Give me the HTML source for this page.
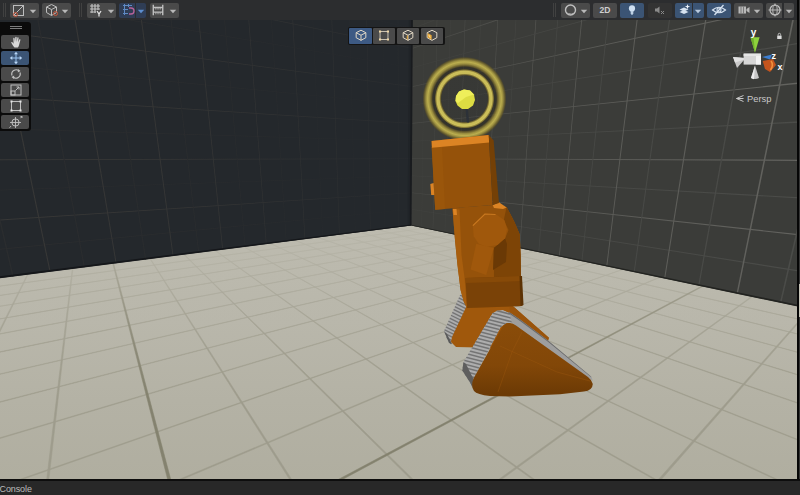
<!DOCTYPE html><html><head><meta charset="utf-8"><style>
html,body{margin:0;padding:0;background:#282828;}
body{width:800px;height:495px;overflow:hidden;position:relative;font-family:"Liberation Sans",sans-serif;}
</style></head><body><svg width="800" height="495" viewBox="0 0 800 495" style="position:absolute;left:0;top:0"><defs><linearGradient id="flg" gradientUnits="userSpaceOnUse" x1="0" y1="220" x2="0" y2="480"><stop offset="0.0000" stop-color="#bdbbaf"/><stop offset="0.0231" stop-color="#bdbbaf"/><stop offset="0.3846" stop-color="#b9b7ab"/><stop offset="0.6923" stop-color="#b4b2a5"/><stop offset="0.9923" stop-color="#b0aea0"/><stop offset="1.0000" stop-color="#b0aea0"/></linearGradient></defs><rect x="0" y="0" width="800" height="495" fill="url(#flg)"/>
<g><polygon points="395.0,227.5 394.7,227.5 20107.2,4705.5 19441.8,4547.6" fill="#9e9c8d" stroke="#9e9c8d" stroke-width="0.50"/><polygon points="424.4,228.2 424.7,228.2 -32538.9,4726.9 -31057.3,4519.4" fill="#9e9c8d" stroke="#9e9c8d" stroke-width="0.50"/><polygon points="377.5,229.7 377.2,229.7 18392.8,4705.3 17786.9,4547.4" fill="#9e9c8d" stroke="#9e9c8d" stroke-width="0.50"/><polygon points="438.9,231.2 439.2,231.2 -30271.5,4727.1 -28892.9,4519.6" fill="#9e9c8d" stroke="#9e9c8d" stroke-width="0.50"/><polygon points="358.9,232.1 358.6,232.1 16678.4,4705.2 16132.1,4547.3" fill="#9e9c8d" stroke="#9e9c8d" stroke-width="0.50"/><polygon points="454.6,234.5 454.9,234.5 -28004.2,4727.3 -26728.5,4519.7" fill="#9e9c8d" stroke="#9e9c8d" stroke-width="0.50"/><polygon points="339.1,234.6 338.7,234.7 14964.1,4705.0 14477.2,4547.1" fill="#9e9c8d" stroke="#9e9c8d" stroke-width="0.50"/><polygon points="471.9,238.1 472.2,238.1 -25736.8,4727.5 -24564.1,4519.9" fill="#9e9c8d" stroke="#9e9c8d" stroke-width="0.50"/><polygon points="317.8,237.3 317.4,237.4 13249.7,4704.9 12822.4,4547.0" fill="#9e9c8d" stroke="#9e9c8d" stroke-width="0.50"/><polygon points="490.8,242.0 491.1,242.1 -23469.5,4727.7 -22399.7,4520.1" fill="#9e9c8d" stroke="#9e9c8d" stroke-width="0.50"/><polygon points="295.0,240.2 294.6,240.3 11535.3,4704.7 11167.5,4546.9" fill="#9e9c8d" stroke="#9e9c8d" stroke-width="0.50"/><polygon points="511.6,246.4 512.0,246.5 -21202.1,4727.9 -20235.3,4520.3" fill="#9e9c8d" stroke="#9e9c8d" stroke-width="0.50"/><polygon points="270.5,243.4 270.0,243.4 9820.9,4704.6 9512.7,4546.7" fill="#9e9c8d" stroke="#9e9c8d" stroke-width="0.50"/><polygon points="534.7,251.2 535.1,251.3 -18934.7,4728.1 -18071.0,4520.5" fill="#9e9c8d" stroke="#9e9c8d" stroke-width="0.50"/><polygon points="244.1,246.8 243.6,246.8 8106.5,4704.5 7857.8,4546.6" fill="#9e9c8d" stroke="#9e9c8d" stroke-width="0.50"/><polygon points="560.5,256.6 561.0,256.7 -16667.4,4728.3 -15906.6,4520.7" fill="#9e9c8d" stroke="#9e9c8d" stroke-width="0.50"/><polygon points="215.4,250.4 214.9,250.5 6392.1,4704.3 6202.9,4546.4" fill="#9e9c8d" stroke="#9e9c8d" stroke-width="0.50"/><polygon points="589.4,262.6 589.9,262.8 -14400.0,4728.4 -13742.2,4520.9" fill="#9e9c8d" stroke="#9e9c8d" stroke-width="0.50"/><polygon points="184.4,254.4 183.8,254.5 4677.7,4704.2 4548.1,4546.3" fill="#9e9c8d" stroke="#9e9c8d" stroke-width="0.50"/><polygon points="622.0,269.5 622.6,269.6 -12132.7,4728.6 -11577.8,4521.0" fill="#9e9c8d" stroke="#9e9c8d" stroke-width="0.50"/><polygon points="150.5,258.7 149.9,258.8 2963.4,4704.0 2893.2,4546.1" fill="#9e9c8d" stroke="#9e9c8d" stroke-width="0.50"/><polygon points="659.1,277.2 659.9,277.4 -9865.3,4728.8 -9413.4,4521.2" fill="#9e9c8d" stroke="#9e9c8d" stroke-width="0.50"/><polygon points="113.7,263.4 112.7,263.5 1251.4,4740.5 1236.1,4512.4" fill="#84826f" stroke="#84826f" stroke-width="0.50"/><polygon points="701.7,286.1 702.8,286.4 -7680.1,4777.9 -7175.7,4477.8" fill="#84826f" stroke="#84826f" stroke-width="0.50"/><polygon points="73.0,268.6 72.2,268.7 -465.4,4703.7 -416.5,4545.9" fill="#9e9c8d" stroke="#9e9c8d" stroke-width="0.50"/><polygon points="751.4,296.5 752.4,296.7 -5330.6,4729.2 -5084.6,4521.6" fill="#9e9c8d" stroke="#9e9c8d" stroke-width="0.50"/><polygon points="28.2,274.3 27.3,274.4 -2179.8,4703.6 -2071.4,4545.7" fill="#9e9c8d" stroke="#9e9c8d" stroke-width="0.50"/><polygon points="809.6,308.7 810.8,308.9 -3063.2,4729.4 -2920.2,4521.8" fill="#9e9c8d" stroke="#9e9c8d" stroke-width="0.50"/><polygon points="-21.4,280.7 -22.4,280.8 -3894.2,4703.4 -3726.2,4545.6" fill="#9e9c8d" stroke="#9e9c8d" stroke-width="0.50"/><polygon points="879.0,323.2 880.4,323.5 -795.9,4729.6 -755.9,4522.0" fill="#9e9c8d" stroke="#9e9c8d" stroke-width="0.50"/><polygon points="-76.8,287.7 -77.8,287.9 -5608.6,4703.3 -5381.1,4545.4" fill="#9e9c8d" stroke="#9e9c8d" stroke-width="0.50"/><polygon points="963.1,340.8 964.8,341.1 1471.5,4729.8 1408.5,4522.1" fill="#9e9c8d" stroke="#9e9c8d" stroke-width="0.50"/><polygon points="-138.8,295.7 -140.0,295.8 -7323.0,4703.1 -7035.9,4545.3" fill="#9e9c8d" stroke="#9e9c8d" stroke-width="0.50"/><polygon points="1067.1,362.6 1069.2,363.0 3738.8,4730.0 3572.9,4522.3" fill="#9e9c8d" stroke="#9e9c8d" stroke-width="0.50"/><polygon points="-208.9,304.6 -210.3,304.8 -9037.4,4703.0 -8690.8,4545.2" fill="#9e9c8d" stroke="#9e9c8d" stroke-width="0.50"/><polygon points="1199.2,390.2 1201.9,390.7 6006.2,4730.2 5737.3,4522.5" fill="#9e9c8d" stroke="#9e9c8d" stroke-width="0.50"/><polygon points="-288.7,314.8 -290.2,315.0 -10751.7,4702.8 -10345.6,4545.0" fill="#9e9c8d" stroke="#9e9c8d" stroke-width="0.50"/><polygon points="1372.3,426.4 1375.9,427.1 8273.5,4730.4 7901.7,4522.7" fill="#9e9c8d" stroke="#9e9c8d" stroke-width="0.50"/><polygon points="-380.4,326.5 -382.1,326.7 -12466.1,4702.7 -12000.5,4544.9" fill="#9e9c8d" stroke="#9e9c8d" stroke-width="0.50"/><polygon points="1609.1,475.9 1614.1,476.9 10540.9,4730.6 10066.1,4522.9" fill="#9e9c8d" stroke="#9e9c8d" stroke-width="0.50"/><polygon points="-486.8,340.1 -488.8,340.4 -14180.5,4702.6 -13655.4,4544.7" fill="#9e9c8d" stroke="#9e9c8d" stroke-width="0.50"/><polygon points="1952.7,547.7 1960.3,549.3 12808.3,4730.8 12230.5,4523.1" fill="#9e9c8d" stroke="#9e9c8d" stroke-width="0.50"/><polygon points="-611.8,356.1 -614.2,356.4 -15894.9,4702.4 -15310.2,4544.6" fill="#9e9c8d" stroke="#9e9c8d" stroke-width="0.50"/><polygon points="2496.5,661.4 2509.2,664.1 15075.6,4731.0 14394.9,4523.3" fill="#9e9c8d" stroke="#9e9c8d" stroke-width="0.50"/><polygon points="-760.7,375.1 -763.6,375.5 -17609.3,4702.3 -16965.1,4544.5" fill="#9e9c8d" stroke="#9e9c8d" stroke-width="0.50"/><polygon points="3487.4,868.6 3512.7,873.9 17343.0,4731.2 16559.2,4523.4" fill="#9e9c8d" stroke="#9e9c8d" stroke-width="0.50"/><polygon points="-940.4,398.1 -945.6,398.7 -19487.0,4738.7 -18470.1,4510.7" fill="#84826f" stroke="#84826f" stroke-width="0.50"/><polygon points="5844.9,1361.6 5951.1,1383.8 19818.9,4780.2 18537.4,4480.0" fill="#84826f" stroke="#84826f" stroke-width="0.50"/><polygon points="-1164.4,426.7 -1168.9,427.2 -21038.1,4702.0 -20274.8,4544.2" fill="#9e9c8d" stroke="#9e9c8d" stroke-width="0.50"/><polygon points="19195.9,4153.3 20024.6,4326.6 21877.7,4731.5 20888.0,4523.8" fill="#9e9c8d" stroke="#9e9c8d" stroke-width="0.50"/><polygon points="-1447.6,462.9 -1453.4,463.6 -22752.5,4701.8 -21929.7,4544.0" fill="#9e9c8d" stroke="#9e9c8d" stroke-width="0.50"/><polygon points="-1818.8,510.3 -1826.5,511.2 -24466.8,4701.7 -23584.5,4543.9" fill="#9e9c8d" stroke="#9e9c8d" stroke-width="0.50"/><polygon points="-2326.3,575.1 -2337.1,576.5 -26181.2,4701.5 -25239.4,4543.7" fill="#9e9c8d" stroke="#9e9c8d" stroke-width="0.50"/><polygon points="-3062.2,669.1 -3078.5,671.2 -27895.6,4701.4 -26894.2,4543.6" fill="#9e9c8d" stroke="#9e9c8d" stroke-width="0.50"/></g>
<defs><linearGradient id="fog" x1="0" y1="0" x2="0" y2="1"><stop offset="0.0000" stop-color="#bdbbaf" stop-opacity="0.82"/><stop offset="0.1573" stop-color="#bcbaae" stop-opacity="0.72"/><stop offset="0.3258" stop-color="#bbb9ad" stop-opacity="0.55"/><stop offset="0.4944" stop-color="#b9b7ab" stop-opacity="0.36"/><stop offset="0.7191" stop-color="#b7b5a9" stop-opacity="0.15"/><stop offset="1.0000" stop-color="#b4b2a5" stop-opacity="0.00"/></linearGradient></defs><rect x="0" y="222" width="800" height="178" fill="url(#fog)"/>
<polygon points="411.2,225.4 -33995.5,4620.5 -21440.0,-36711.7 417.4,-709.2" fill="#24282c" />
<polygon points="411.2,225.4 21452.7,4625.3 14198.1,-36708.7 417.4,-709.2" fill="#3b3c39" />
<g><polygon points="411.3,209.5 411.3,208.9 -34007.1,3541.2 -33325.3,3509.6" fill="#2b2d2f" /><polygon points="411.3,209.5 411.3,208.9 21471.3,3545.9 21053.8,3514.2" fill="#4b4c49" /><polygon points="398.5,227.0 398.1,227.1 397.0,-742.8 397.7,-741.7" fill="#383837" /><polygon points="421.6,227.6 421.9,227.6 434.5,-753.9 433.9,-752.4" fill="#4b4c49" /><polygon points="411.5,193.0 411.5,192.4 -33671.0,2434.8 -32995.9,2425.1" fill="#383837" /><polygon points="411.5,193.0 411.5,192.4 21277.2,2439.5 20863.5,2429.7" fill="#63635f" /><polygon points="384.9,228.8 384.4,228.8 375.4,-778.5 376.1,-777.3" fill="#2b2d2f" /><polygon points="432.8,229.9 433.1,230.0 453.2,-802.6 452.5,-800.9" fill="#63635f" /><polygon points="411.6,176.1 411.6,175.6 -33335.0,1328.4 -32666.5,1340.7" fill="#2b2d2f" /><polygon points="411.6,176.1 411.6,175.6 21083.0,1333.1 20673.1,1345.2" fill="#4b4c49" /><polygon points="370.6,230.6 370.1,230.7 352.0,-817.1 352.8,-815.8" fill="#383837" /><polygon points="444.7,232.4 445.1,232.5 473.9,-856.8 473.2,-854.9" fill="#4b4c49" /><polygon points="411.7,159.0 411.7,158.4 -32998.9,222.0 -32337.1,256.2" fill="#383837" /><polygon points="411.7,159.0 411.7,158.4 20888.8,226.6 20482.8,260.7" fill="#63635f" /><polygon points="355.5,232.5 355.0,232.6 326.5,-859.0 327.4,-857.6" fill="#2b2d2f" /><polygon points="457.6,235.1 458.0,235.2 497.1,-917.5 496.3,-915.4" fill="#63635f" /><polygon points="411.8,141.5 411.8,140.9 -32662.8,-884.3 -32007.6,-828.2" fill="#2b2d2f" /><polygon points="411.8,141.5 411.8,140.9 20694.6,-879.8 20292.4,-823.8" fill="#4b4c49" /><polygon points="339.7,234.5 339.1,234.6 298.8,-904.7 299.7,-903.1" fill="#383837" /><polygon points="471.3,238.0 471.8,238.1 523.3,-985.9 522.4,-983.5" fill="#4b4c49" /><polygon points="411.9,123.7 411.9,123.1 -32326.7,-1990.7 -31678.2,-1912.7" fill="#383837" /><polygon points="411.9,123.7 411.9,123.1 20500.4,-1986.2 20102.1,-1908.3" fill="#63635f" /><polygon points="322.9,236.7 322.4,236.8 268.4,-954.7 269.4,-953.0" fill="#2b2d2f" /><polygon points="486.2,241.1 486.7,241.2 553.1,-1063.6 552.0,-1060.9" fill="#63635f" /><polygon points="412.0,105.5 412.0,104.9 -31990.6,-3097.1 -31348.8,-2997.1" fill="#2b2d2f" /><polygon points="412.0,105.5 412.0,104.9 20306.2,-3092.6 19911.7,-2992.8" fill="#4b4c49" /><polygon points="305.2,238.9 304.6,239.0 235.1,-1009.6 236.2,-1007.7" fill="#383837" /><polygon points="502.2,244.4 502.7,244.5 587.2,-1152.6 586.0,-1149.5" fill="#4b4c49" /><polygon points="412.2,86.9 412.2,86.3 -31654.5,-4203.5 -31019.4,-4081.6" fill="#383837" /><polygon points="412.2,86.9 412.2,86.3 20112.0,-4199.0 19721.4,-4077.2" fill="#63635f" /><polygon points="286.5,241.3 285.9,241.4 198.2,-1070.3 199.5,-1068.2" fill="#2b2d2f" /><polygon points="519.5,248.0 520.1,248.2 626.6,-1255.7 625.2,-1252.1" fill="#63635f" /><polygon points="412.3,68.0 412.3,67.4 -31318.4,-5309.8 -30689.9,-5166.0" fill="#2b2d2f" /><polygon points="412.3,68.0 412.3,67.4 19917.8,-5305.5 19531.1,-5161.7" fill="#4b4c49" /><polygon points="266.6,243.9 266.0,244.0 157.4,-1137.6 158.8,-1135.3" fill="#383837" /><polygon points="538.4,252.0 539.1,252.1 672.8,-1376.3 671.2,-1372.1" fill="#4b4c49" /><polygon points="412.4,48.7 412.4,48.0 -30982.4,-6416.2 -30360.5,-6250.5" fill="#383837" /><polygon points="412.4,48.7 412.4,48.0 19723.6,-6411.9 19340.7,-6246.2" fill="#63635f" /><polygon points="245.5,246.6 244.8,246.7 111.8,-1212.7 113.4,-1210.1" fill="#2b2d2f" /><polygon points="559.0,256.3 559.7,256.4 727.6,-1519.5 725.6,-1514.4" fill="#63635f" /><polygon points="412.5,29.0 412.5,28.3 -30646.3,-7522.6 -30031.1,-7334.9" fill="#2b2d2f" /><polygon points="412.5,29.0 412.5,28.3 19529.4,-7518.3 19150.4,-7330.7" fill="#4b4c49" /><polygon points="223.1,249.4 222.3,249.5 60.6,-1297.0 62.3,-1294.1" fill="#383837" /><polygon points="581.5,261.0 582.3,261.2 793.7,-1692.2 791.3,-1686.0" fill="#4b4c49" /><polygon points="412.7,8.8 412.7,8.2 -30310.2,-8629.0 -29701.7,-8419.4" fill="#383837" /><polygon points="412.7,8.8 412.7,8.2 19335.2,-8624.7 18960.0,-8415.2" fill="#63635f" /><polygon points="199.1,252.5 198.3,252.6 2.6,-1392.4 4.7,-1389.1" fill="#2b2d2f" /><polygon points="606.3,266.2 607.2,266.4 875.0,-1904.5 872.0,-1896.7" fill="#63635f" /><polygon points="412.8,-11.7 412.8,-12.4 -29974.1,-9735.3 -29372.2,-9503.8" fill="#2b2d2f" /><polygon points="412.8,-11.7 412.8,-12.4 19141.0,-9731.1 18769.7,-9499.7" fill="#4b4c49" /><polygon points="173.5,255.8 172.6,255.9 -63.4,-1501.3 -61.1,-1497.5" fill="#383837" /><polygon points="633.7,271.9 634.7,272.1 977.3,-2171.8 973.5,-2162.0" fill="#4b4c49" /><polygon points="412.9,-32.7 413.0,-33.4 -29638.0,-10841.7 -29042.8,-10588.3" fill="#383837" /><polygon points="412.9,-32.7 413.0,-33.4 18946.9,-10837.6 18579.3,-10584.2" fill="#63635f" /><polygon points="146.1,259.3 145.1,259.4 -139.5,-1626.5 -136.8,-1622.1" fill="#2b2d2f" /><polygon points="664.2,278.3 665.2,278.5 1110.1,-2518.8 1105.2,-2505.8" fill="#63635f" /><polygon points="413.1,-54.2 413.1,-54.9 -29301.9,-11948.1 -28713.4,-11672.8" fill="#2b2d2f" /><polygon points="413.1,-54.2 413.1,-54.9 18752.7,-11944.0 18389.0,-11668.7" fill="#4b4c49" /><polygon points="116.6,263.0 115.6,263.2 -227.9,-1772.2 -224.8,-1767.1" fill="#383837" /><polygon points="698.2,285.4 699.4,285.7 1289.5,-2987.3 1282.6,-2969.4" fill="#4b4c49" /><polygon points="413.2,-76.1 413.2,-76.9 -28965.9,-13054.5 -28384.0,-12757.2" fill="#383837" /><polygon points="413.2,-76.1 413.2,-76.9 18558.5,-13050.4 18198.7,-12753.2" fill="#63635f" /><polygon points="84.9,267.1 83.8,267.2 -332.1,-1943.8 -328.4,-1937.8" fill="#2b2d2f" /><polygon points="736.5,293.4 737.9,293.7 1544.9,-3654.7 1534.9,-3628.4" fill="#63635f" /><polygon points="413.4,-98.5 413.4,-99.3 -28629.8,-14160.8 -28054.5,-13841.7" fill="#2b2d2f" /><polygon points="413.4,-98.5 413.4,-99.3 18364.3,-14156.8 18008.3,-13837.7" fill="#4b4c49" /><polygon points="50.6,271.5 49.5,271.6 -456.7,-2149.0 -452.2,-2141.7" fill="#383837" /><polygon points="779.9,302.5 781.4,302.8 1938.0,-4681.6 1921.9,-4639.3" fill="#4b4c49" /><polygon points="413.5,-121.5 413.5,-122.2 -28293.7,-15267.2 -27725.1,-14926.1" fill="#383837" /><polygon points="413.5,-121.5 413.5,-122.2 18170.1,-15263.3 17818.0,-14922.2" fill="#63635f" /><polygon points="13.6,276.2 12.3,276.4 -608.2,-2398.5 -602.7,-2389.5" fill="#2b2d2f" /><polygon points="829.5,312.9 831.3,313.2 2621.0,-6465.7 2590.8,-6386.8" fill="#63635f" /><polygon points="413.7,-144.9 413.7,-145.7 -27957.6,-16373.6 -27395.7,-16010.6" fill="#2b2d2f" /><polygon points="413.7,-144.9 413.7,-145.7 17975.9,-16369.7 17627.6,-16006.7" fill="#4b4c49" /><polygon points="-26.8,281.3 -28.1,281.5 -796.4,-2708.6 -789.5,-2697.3" fill="#383837" /><polygon points="886.8,324.8 888.8,325.3 4101.8,-10334.1 4026.5,-10137.4" fill="#4b4c49" /><polygon points="413.8,-168.9 413.9,-169.7 -27621.5,-17480.0 -27066.3,-17095.0" fill="#383837" /><polygon points="413.8,-168.9 413.9,-169.7 17781.7,-17476.1 17437.3,-17091.2" fill="#63635f" /><polygon points="-70.7,287.0 -72.2,287.2 -1036.7,-3104.3 -1027.8,-3089.7" fill="#2b2d2f" /><polygon points="953.5,338.8 955.9,339.3 9741.5,-25066.6 9317.5,-23959.0" fill="#63635f" /><polygon points="414.0,-193.4 414.0,-194.2 -27285.4,-18586.4 -26736.8,-18179.5" fill="#2b2d2f" /><polygon points="414.0,-193.4 414.0,-194.2 17587.5,-18582.5 17246.9,-18175.7" fill="#4b4c49" /><polygon points="-118.9,293.1 -120.5,293.3 -1353.9,-3626.8 -1341.9,-3607.1" fill="#383837" /><polygon points="1032.5,355.3 1035.3,355.9 15194.4,-35104.7 14213.2,-32814.7" fill="#4b4c49" /><polygon points="414.2,-218.5 414.2,-219.3 -26949.3,-19692.7 -26407.4,-19263.9" fill="#383837" /><polygon points="414.2,-218.5 414.2,-219.3 17393.3,-19688.9 17056.6,-19260.2" fill="#63635f" /><polygon points="-171.8,299.9 -173.6,300.1 -1792.1,-4348.6 -1775.1,-4320.7" fill="#2b2d2f" /><polygon points="1127.2,375.1 1130.6,375.8 15861.5,-31303.5 14837.0,-29260.4" fill="#63635f" /><polygon points="414.3,-244.2 414.4,-245.1 -26613.3,-20799.1 -26078.0,-20348.4" fill="#2b2d2f" /><polygon points="414.3,-244.2 414.4,-245.1 17199.1,-20795.4 16866.3,-20344.7" fill="#4b4c49" /><polygon points="-230.3,307.3 -232.3,307.6 -2436.9,-5410.7 -2411.0,-5368.1" fill="#383837" /><polygon points="1242.9,399.3 1247.1,400.2 16528.7,-27502.3 15460.9,-25706.0" fill="#4b4c49" /><polygon points="414.5,-270.5 414.5,-271.4 -26277.2,-21905.5 -25748.6,-21432.8" fill="#383837" /><polygon points="414.5,-270.5 414.5,-271.4 17004.9,-21901.8 16675.9,-21429.2" fill="#63635f" /><polygon points="-295.2,315.6 -297.5,315.9 -3479.4,-7127.8 -3435.2,-7055.1" fill="#2b2d2f" /><polygon points="1387.6,429.6 1393.0,430.7 17195.9,-23701.1 16084.7,-22151.7" fill="#63635f" /><polygon points="414.7,-297.5 414.7,-298.4 -25941.1,-23011.9 -25419.1,-22517.3" fill="#2b2d2f" /><polygon points="414.7,-297.5 414.7,-298.4 16810.8,-23008.2 16485.6,-22513.7" fill="#4b4c49" /><polygon points="-367.8,324.9 -370.3,325.2 -5451.5,-10376.3 -5359.6,-10224.9" fill="#383837" /><polygon points="1573.7,468.5 1580.7,469.9 17863.0,-19899.9 16708.5,-18597.3" fill="#4b4c49" /><polygon points="414.9,-325.1 414.9,-326.0 -25605.0,-24118.2 -25089.7,-23601.7" fill="#383837" /><polygon points="414.9,-325.1 414.9,-326.0 16616.6,-24114.6 16295.2,-23598.2" fill="#63635f" /><polygon points="-449.4,335.3 -452.2,335.7 -10597.7,-18852.8 -10301.7,-18365.3" fill="#2b2d2f" /><polygon points="1821.9,520.4 1831.4,522.4 18530.2,-16098.7 17332.4,-15043.0" fill="#63635f" /><polygon points="415.1,-353.4 415.1,-354.3 -25268.9,-25224.6 -24760.3,-24686.2" fill="#2b2d2f" /><polygon points="415.1,-353.4 415.1,-354.3 16422.4,-25221.1 16104.9,-24682.7" fill="#4b4c49" /><polygon points="-541.8,347.1 -545.0,347.6 -22358.6,-36583.1 -21198.8,-34754.5" fill="#383837" /><polygon points="2169.4,593.0 2183.1,595.9 19197.3,-12297.5 17956.2,-11488.6" fill="#4b4c49" /><polygon points="415.3,-382.4 415.3,-383.4 -24932.8,-26331.0 -24430.9,-25770.6" fill="#383837" /><polygon points="415.3,-382.4 415.3,-383.4 16228.2,-26327.5 15914.5,-25767.2" fill="#63635f" /><polygon points="-647.4,360.6 -651.1,361.1 -23229.4,-33716.5 -22026.3,-32030.6" fill="#2b2d2f" /><polygon points="2690.8,702.1 2712.3,706.6 19864.5,-8496.3 18580.0,-7934.3" fill="#63635f" /><polygon points="415.5,-412.2 415.5,-413.2 -24596.7,-27437.4 -24101.4,-26855.1" fill="#2b2d2f" /><polygon points="415.5,-412.2 415.5,-413.2 16034.0,-27433.9 15724.2,-26851.7" fill="#4b4c49" /><polygon points="-769.1,376.2 -773.4,376.7 -24100.1,-30850.0 -22853.7,-29306.7" fill="#383837" /><polygon points="3560.2,883.9 3598.5,891.9 20531.7,-4695.1 19203.9,-4379.9" fill="#4b4c49" /><polygon points="415.7,-442.7 415.7,-443.7 -24260.7,-28543.7 -23772.0,-27939.6" fill="#383837" /><polygon points="415.7,-442.7 415.7,-443.7 15839.8,-28540.3 15533.8,-27936.2" fill="#63635f" /><polygon points="-910.9,394.3 -916.0,394.9 -24970.9,-27983.4 -23681.1,-26582.8" fill="#2b2d2f" /><polygon points="5300.6,1247.8 5387.5,1266.0 21198.8,-893.9 19827.7,-825.6" fill="#63635f" /><polygon points="415.9,-474.1 415.9,-475.1 -23924.6,-29650.1 -23442.6,-29024.0" fill="#2b2d2f" /><polygon points="415.9,-474.1 415.9,-475.1 15645.6,-29646.7 15343.5,-29020.7" fill="#4b4c49" /><polygon points="-1078.4,415.7 -1084.4,416.5 -25841.7,-25116.8 -24508.6,-23858.9" fill="#383837" /><polygon points="10534.7,2342.2 10889.3,2416.4 21866.0,2907.3 20451.5,2728.7" fill="#4b4c49" /><polygon points="416.1,-506.2 416.1,-507.3 -23588.5,-30756.5 -23113.2,-30108.5" fill="#383837" /><polygon points="416.1,-506.2 416.1,-507.3 15451.4,-30753.2 15153.2,-30105.2" fill="#63635f" /><polygon points="-1279.2,441.3 -1286.4,442.3 -26712.5,-22250.3 -25336.0,-21135.0" fill="#2b2d2f" /><polygon points="416.3,-539.3 416.3,-540.4 -23252.4,-31862.9 -22783.7,-31192.9" fill="#2b2d2f" /><polygon points="416.3,-539.3 416.3,-540.4 15257.2,-31859.6 14962.8,-31189.7" fill="#4b4c49" /><polygon points="-1524.2,472.6 -1533.1,473.8 -27583.3,-19383.7 -26163.5,-18411.1" fill="#383837" /><polygon points="416.5,-573.2 416.5,-574.3 -22916.3,-32969.2 -22454.3,-32277.4" fill="#383837" /><polygon points="416.5,-573.2 416.5,-574.3 15063.0,-32966.0 14772.5,-32274.2" fill="#63635f" /><polygon points="-1829.9,511.7 -1841.2,513.1 -28454.0,-16517.1 -26990.9,-15687.2" fill="#2b2d2f" /><polygon points="416.8,-608.1 416.8,-609.2 -22580.2,-34075.6 -22124.9,-33361.8" fill="#2b2d2f" /><polygon points="416.8,-608.1 416.8,-609.2 14868.8,-34072.4 14582.1,-33358.7" fill="#4b4c49" /><polygon points="-2222.1,561.8 -2236.9,563.7 -29324.8,-13650.6 -27818.3,-12963.3" fill="#383837" /><polygon points="417.0,-643.9 417.0,-645.1 -22244.1,-35182.0 -21795.5,-34446.3" fill="#383837" /><polygon points="417.0,-643.9 417.0,-645.1 14674.6,-35178.9 14391.8,-34443.2" fill="#63635f" /><polygon points="-2743.5,628.4 -2763.5,630.9 -30195.6,-10784.0 -28645.8,-10239.4" fill="#2b2d2f" /><polygon points="417.2,-680.8 417.2,-682.0 -21908.1,-36288.4 -21466.0,-35530.7" fill="#2b2d2f" /><polygon points="417.2,-680.8 417.2,-682.0 14480.5,-36285.3 14201.4,-35527.7" fill="#4b4c49" /><polygon points="-3470.5,721.3 -3499.2,724.9 -31066.4,-7917.4 -29473.2,-7515.5" fill="#383837" /><polygon points="417.5,-718.7 417.5,-720.0 -21572.0,-37394.8 -21136.6,-36615.2" fill="#383837" /><polygon points="417.5,-718.7 417.5,-720.0 14286.3,-37391.7 14011.1,-36612.2" fill="#63635f" /><polygon points="-4554.6,859.7 -4599.1,865.4 -31937.2,-5050.9 -30300.7,-4791.6" fill="#2b2d2f" /><polygon points="417.7,-757.8 417.8,-759.1 -21235.9,-38501.1 -20807.2,-37699.6" fill="#2b2d2f" /><polygon points="417.7,-757.8 417.8,-759.1 14092.1,-38498.1 13820.8,-37696.7" fill="#4b4c49" /><polygon points="-6344.5,1088.4 -6422.9,1098.4 -32808.0,-2184.3 -31128.1,-2067.8" fill="#383837" /></g>
<defs><linearGradient id="lwf" gradientUnits="userSpaceOnUse" x1="0" y1="0" x2="411" y2="0"><stop offset="0" stop-color="#24282c" stop-opacity="0"/><stop offset="0.45" stop-color="#24282c" stop-opacity="0.15"/><stop offset="1" stop-color="#24282c" stop-opacity="0.75"/></linearGradient><linearGradient id="rwf" gradientUnits="userSpaceOnUse" x1="411" y1="0" x2="800" y2="0"><stop offset="0" stop-color="#3b3c39" stop-opacity="0.7"/><stop offset="0.5" stop-color="#3b3c39" stop-opacity="0.2"/><stop offset="1" stop-color="#3b3c39" stop-opacity="0"/></linearGradient></defs>
<polygon points="411.2,225.4 -33995.5,4620.5 -21440.0,-36711.7 417.4,-709.2" fill="url(#lwf)" />
<polygon points="411.2,225.4 21452.7,4625.3 14198.1,-36708.7 417.4,-709.2" fill="url(#rwf)" />
<line x1="410.6" y1="225.6" x2="411.9" y2="19" stroke="#191b1e" stroke-width="2"/><line x1="408.6" y1="226" x2="409.9" y2="19" stroke="#1f2226" stroke-width="2" opacity="0.6"/>
<polygon points="411.2,225.6 411.2,224.4 -34800.0,4655.5 -33211.0,4533.3" fill="#15171a" />
<polygon points="411.2,225.5 411.2,224.7 21778.2,4646.1 21130.0,4564.3" fill="#222320" />
<defs><radialGradient id="hg" cx="0.5" cy="0.5" r="0.5"><stop offset="0.0000" stop-color="#1c1c18" stop-opacity="0.10"/><stop offset="0.5429" stop-color="#1c1c18" stop-opacity="0.10"/><stop offset="0.5619" stop-color="#6e5e22" stop-opacity="0.60"/><stop offset="0.6000" stop-color="#cfc158" stop-opacity="0.95"/><stop offset="0.6571" stop-color="#d4c65c" stop-opacity="0.95"/><stop offset="0.6905" stop-color="#8a7a30" stop-opacity="0.80"/><stop offset="0.7095" stop-color="#2a2618" stop-opacity="0.45"/><stop offset="0.7524" stop-color="#2a2618" stop-opacity="0.45"/><stop offset="0.7810" stop-color="#6e6026" stop-opacity="0.70"/><stop offset="0.8286" stop-color="#a4963f" stop-opacity="0.90"/><stop offset="0.8762" stop-color="#c2b450" stop-opacity="0.95"/><stop offset="0.9190" stop-color="#a4963f" stop-opacity="0.90"/><stop offset="0.9619" stop-color="#7a6c2a" stop-opacity="0.65"/><stop offset="0.9905" stop-color="#5a4e20" stop-opacity="0.25"/><stop offset="1.0000" stop-color="#5a4e20" stop-opacity="0.00"/></radialGradient></defs><circle cx="464.5" cy="98.75" r="42" fill="url(#hg)"/><line x1="466.5" y1="107" x2="468" y2="122.5" stroke="#2c3138" stroke-width="2.4"/><polygon points="456,96 459,91.5 464,89.5 470,90.5 474,94.5 475,100 473,105.5 468,109 462,109 457.5,105.5 455.5,101" fill="#dcdc42"/><polygon points="456,96 459,91.5 464,89.5 470,90.5 474,94.5 466,97 458,103 455.5,101" fill="#eeee5a"/>
<clipPath id="tc1"><polygon points="460.0,295.0 465.0,294.0 471.0,303.0 453.0,339.0 451.0,345.0 447.0,339.0 444.0,331.0"/></clipPath><g clip-path="url(#tc1)"><polygon points="460.0,295.0 465.0,294.0 471.0,303.0 453.0,339.0 451.0,345.0 447.0,339.0 444.0,331.0" fill="#adadad" /><line x1="466.7" y1="270.0" x2="490.1" y2="281.7" stroke="#747474" stroke-width="1.3"/><line x1="465.4" y1="272.9" x2="488.8" y2="284.6" stroke="#747474" stroke-width="1.3"/><line x1="464.1" y1="275.8" x2="487.5" y2="287.5" stroke="#747474" stroke-width="1.3"/><line x1="462.8" y1="278.7" x2="486.2" y2="290.4" stroke="#747474" stroke-width="1.3"/><line x1="461.6" y1="281.6" x2="485.0" y2="293.3" stroke="#747474" stroke-width="1.3"/><line x1="460.3" y1="284.5" x2="483.7" y2="296.2" stroke="#747474" stroke-width="1.3"/><line x1="459.0" y1="287.4" x2="482.4" y2="299.1" stroke="#747474" stroke-width="1.3"/><line x1="457.7" y1="290.3" x2="481.1" y2="302.0" stroke="#747474" stroke-width="1.3"/><line x1="456.4" y1="293.2" x2="479.8" y2="304.9" stroke="#747474" stroke-width="1.3"/><line x1="455.1" y1="296.1" x2="478.5" y2="307.8" stroke="#747474" stroke-width="1.3"/><line x1="453.8" y1="299.0" x2="477.2" y2="310.7" stroke="#747474" stroke-width="1.3"/><line x1="452.5" y1="301.9" x2="475.9" y2="313.6" stroke="#747474" stroke-width="1.3"/><line x1="451.2" y1="304.8" x2="474.6" y2="316.5" stroke="#747474" stroke-width="1.3"/><line x1="450.0" y1="307.7" x2="473.4" y2="319.4" stroke="#747474" stroke-width="1.3"/><line x1="448.7" y1="310.6" x2="472.1" y2="322.3" stroke="#747474" stroke-width="1.3"/><line x1="447.4" y1="313.5" x2="470.8" y2="325.2" stroke="#747474" stroke-width="1.3"/><line x1="446.1" y1="316.4" x2="469.5" y2="328.1" stroke="#747474" stroke-width="1.3"/><line x1="444.8" y1="319.3" x2="468.2" y2="331.0" stroke="#747474" stroke-width="1.3"/><line x1="443.5" y1="322.2" x2="466.9" y2="333.9" stroke="#747474" stroke-width="1.3"/><line x1="442.2" y1="325.1" x2="465.6" y2="336.8" stroke="#747474" stroke-width="1.3"/><line x1="440.9" y1="328.0" x2="464.3" y2="339.7" stroke="#747474" stroke-width="1.3"/><line x1="439.6" y1="330.9" x2="463.0" y2="342.6" stroke="#747474" stroke-width="1.3"/><line x1="438.4" y1="333.8" x2="461.8" y2="345.5" stroke="#747474" stroke-width="1.3"/><line x1="437.1" y1="336.7" x2="460.5" y2="348.4" stroke="#747474" stroke-width="1.3"/><line x1="435.8" y1="339.6" x2="459.2" y2="351.3" stroke="#747474" stroke-width="1.3"/><line x1="434.5" y1="342.5" x2="457.9" y2="354.2" stroke="#747474" stroke-width="1.3"/><line x1="433.2" y1="345.4" x2="456.6" y2="357.1" stroke="#747474" stroke-width="1.3"/><line x1="431.9" y1="348.3" x2="455.3" y2="360.0" stroke="#747474" stroke-width="1.3"/><line x1="430.6" y1="351.2" x2="454.0" y2="362.9" stroke="#747474" stroke-width="1.3"/><line x1="429.3" y1="354.1" x2="452.7" y2="365.8" stroke="#747474" stroke-width="1.3"/><line x1="428.0" y1="357.0" x2="451.4" y2="368.7" stroke="#747474" stroke-width="1.3"/><line x1="426.8" y1="359.9" x2="450.2" y2="371.6" stroke="#747474" stroke-width="1.3"/><line x1="425.5" y1="362.8" x2="448.9" y2="374.5" stroke="#747474" stroke-width="1.3"/><line x1="424.2" y1="365.7" x2="447.6" y2="377.4" stroke="#747474" stroke-width="1.3"/></g>
<polygon points="444.0,331.0 447.0,334.0 452.0,344.0 449.0,343.0" fill="#5a5a5a" />
<polygon points="468.0,303.0 512.2,305.6 548.9,337.8 548.0,340.5 500.0,348.0 456.0,347.0 451.0,342.0 452.0,337.0" fill="#a0580c" />
<polygon points="509.0,305.5 512.2,305.5 548.9,337.8 548.0,340.5 510.5,314.0" fill="#9a540b" />
<polygon points="452.5,208.0 492.5,205.0 506.6,207.0 510.6,214.6 514.6,222.2 519.7,234.3 520.7,255.0 521.0,277.0 522.0,306.0 467.0,308.0 463.8,301.8 460.6,290.0 457.5,265.0 455.0,240.0" fill="#95520a" />
<polygon points="452.5,209.0 459.5,209.5 461.5,255.0 464.5,277.5 467.0,308.0 463.8,301.8 460.6,290.0 457.5,265.0 455.0,240.0" fill="#a85e0e" />
<polygon points="453.0,209.0 456.5,209.0 457.0,215.0 453.5,215.0" fill="#dc8424" />
<polygon points="506.6,207.0 510.6,214.6 514.6,222.2 519.7,234.3 520.7,255.0 521.0,277.0 494.0,278.0 493.8,248.1 505.0,238.8 508.5,230.0 503.8,220.0" fill="#7d4406" />
<polygon points="497.5,244.9 505.0,238.3 507.0,244.0 506.0,262.0 493.0,270.0 493.8,248.1" fill="#6a3905" />
<polygon points="465.6,278.0 521.0,276.0 522.5,306.0 467.0,308.0" fill="#7a4207" />
<polygon points="465.6,278.0 521.0,276.0 521.2,281.0 465.9,283.0" fill="#874a08" />
<polygon points="519.5,276.0 522.0,276.0 523.5,305.0 520.5,306.0" fill="#5c3204" />
<polygon points="492.7,205.0 499.0,202.3 506.6,207.5 503.0,209.0 494.0,208.0" fill="#dc8424" />
<polygon points="472.7,225.2 484.8,213.6 495.5,214.1 504.5,220.2 507.1,229.2 505.0,238.3 497.5,244.9 486.0,247.0 478.5,243.4 473.7,236.3" fill="#a0580c" />
<polyline points="472.9,225.6 484.9,214 495.5,214.5" fill="none" stroke="#c87820" stroke-width="1.2"/>
<polygon points="476.2,243.8 493.8,248.1 486.2,275.0 470.6,269.4" fill="#a0580c" />
<polygon points="431.6,141.1 488.7,135.0 492.7,205.0 435.2,209.8" fill="#95520a" />
<polygon points="431.6,147.0 442.0,146.0 445.0,209.0 435.2,209.8" fill="#9a560b" />
<polygon points="431.6,141.1 488.7,135.0 489.1,142.6 431.9,147.7" fill="#dc8424" />
<polygon points="488.7,135.0 493.6,140.5 499.0,203.0 492.7,205.0" fill="#744006" />
<polygon points="430.3,184.0 433.6,183.0 434.3,195.0 431.2,195.0" fill="#dc8424" />
<clipPath id="tc2"><polygon points="492.3,313.2 497.0,310.5 503.0,310.0 510.0,313.0 520.0,320.0 512.0,324.0 507.0,323.0 501.0,327.0 474.0,378.0 472.0,386.0 470.5,383.2 462.3,370.5 463.5,362.0"/></clipPath><g clip-path="url(#tc2)"><polygon points="492.3,313.2 497.0,310.5 503.0,310.0 510.0,313.0 520.0,320.0 512.0,324.0 507.0,323.0 501.0,327.0 474.0,378.0 472.0,386.0 470.5,383.2 462.3,370.5 463.5,362.0" fill="#adadad" /><line x1="501.0" y1="286.4" x2="541.3" y2="296.8" stroke="#747474" stroke-width="1.5"/><line x1="499.1" y1="289.5" x2="539.4" y2="299.9" stroke="#747474" stroke-width="1.5"/><line x1="497.3" y1="292.7" x2="537.6" y2="303.1" stroke="#747474" stroke-width="1.5"/><line x1="495.4" y1="295.8" x2="535.7" y2="306.2" stroke="#747474" stroke-width="1.5"/><line x1="493.5" y1="299.0" x2="533.8" y2="309.4" stroke="#747474" stroke-width="1.5"/><line x1="491.7" y1="302.1" x2="532.0" y2="312.6" stroke="#747474" stroke-width="1.5"/><line x1="489.8" y1="305.3" x2="530.1" y2="315.7" stroke="#747474" stroke-width="1.5"/><line x1="488.0" y1="308.4" x2="528.3" y2="318.9" stroke="#747474" stroke-width="1.5"/><line x1="486.1" y1="311.6" x2="526.4" y2="322.0" stroke="#747474" stroke-width="1.5"/><line x1="484.2" y1="314.7" x2="524.5" y2="325.1" stroke="#747474" stroke-width="1.5"/><line x1="482.4" y1="317.9" x2="522.7" y2="328.3" stroke="#747474" stroke-width="1.5"/><line x1="480.5" y1="321.0" x2="520.8" y2="331.4" stroke="#747474" stroke-width="1.5"/><line x1="478.7" y1="324.2" x2="519.0" y2="334.6" stroke="#747474" stroke-width="1.5"/><line x1="476.8" y1="327.3" x2="517.1" y2="337.8" stroke="#747474" stroke-width="1.5"/><line x1="474.9" y1="330.5" x2="515.2" y2="340.9" stroke="#747474" stroke-width="1.5"/><line x1="473.1" y1="333.6" x2="513.4" y2="344.1" stroke="#747474" stroke-width="1.5"/><line x1="471.2" y1="336.8" x2="511.5" y2="347.2" stroke="#747474" stroke-width="1.5"/><line x1="469.4" y1="339.9" x2="509.7" y2="350.4" stroke="#747474" stroke-width="1.5"/><line x1="467.5" y1="343.1" x2="507.8" y2="353.5" stroke="#747474" stroke-width="1.5"/><line x1="465.7" y1="346.2" x2="506.0" y2="356.6" stroke="#747474" stroke-width="1.5"/><line x1="463.8" y1="349.4" x2="504.1" y2="359.8" stroke="#747474" stroke-width="1.5"/><line x1="461.9" y1="352.5" x2="502.2" y2="362.9" stroke="#747474" stroke-width="1.5"/><line x1="460.1" y1="355.7" x2="500.4" y2="366.1" stroke="#747474" stroke-width="1.5"/><line x1="458.2" y1="358.8" x2="498.5" y2="369.2" stroke="#747474" stroke-width="1.5"/><line x1="456.4" y1="362.0" x2="496.7" y2="372.4" stroke="#747474" stroke-width="1.5"/><line x1="454.5" y1="365.1" x2="494.8" y2="375.6" stroke="#747474" stroke-width="1.5"/><line x1="452.6" y1="368.3" x2="492.9" y2="378.7" stroke="#747474" stroke-width="1.5"/><line x1="450.8" y1="371.4" x2="491.1" y2="381.9" stroke="#747474" stroke-width="1.5"/><line x1="448.9" y1="374.6" x2="489.2" y2="385.0" stroke="#747474" stroke-width="1.5"/><line x1="447.1" y1="377.7" x2="487.4" y2="388.1" stroke="#747474" stroke-width="1.5"/><line x1="445.2" y1="380.9" x2="485.5" y2="391.3" stroke="#747474" stroke-width="1.5"/><line x1="443.3" y1="384.0" x2="483.6" y2="394.4" stroke="#747474" stroke-width="1.5"/><line x1="441.5" y1="387.2" x2="481.8" y2="397.6" stroke="#747474" stroke-width="1.5"/><line x1="439.6" y1="390.3" x2="479.9" y2="400.8" stroke="#747474" stroke-width="1.5"/><line x1="437.8" y1="393.5" x2="478.1" y2="403.9" stroke="#747474" stroke-width="1.5"/><line x1="435.9" y1="396.6" x2="476.2" y2="407.1" stroke="#747474" stroke-width="1.5"/><line x1="434.0" y1="399.8" x2="474.3" y2="410.2" stroke="#747474" stroke-width="1.5"/></g>
<polygon points="463.5,362.0 466.0,364.0 473.5,379.0 472.5,388.0 470.5,383.2 462.3,370.5" fill="#5e5e5e" />
<polygon points="509.0,312.0 520.0,319.5 548.0,340.5 591.0,376.5 593.0,381.0 589.0,378.0 512.0,323.5" fill="#9e9e9e" />
<polygon points="509.0,312.0 520.0,319.5 548.0,340.5 591.0,376.5 591.5,377.5 548.0,341.7 520.0,321.0 509.0,313.5" fill="#6a6a6a" />
<defs><linearGradient id="ffg" gradientUnits="userSpaceOnUse" x1="0" y1="323" x2="0" y2="394"><stop offset="0" stop-color="#8a4c09"/><stop offset="0.6" stop-color="#824708"/><stop offset="1" stop-color="#6c3a05"/></linearGradient></defs>
<path d="M509.5,323 Q505,322.5 502,327.5 L473.5,378.5 Q470.5,386 474,391 Q477,394.5 490,396 L510,396.6 L560,394.2 L584,391.5 Q592.5,390.5 592.8,384 Q592,380 588,377 L516,325.5 Q513,323.2 509.5,323 Z" fill="url(#ffg)"/>
<path d="M522,332 L512,352 L498,392 M500,346 L557,372 L590,381" stroke="#a05a10" stroke-width="0.8" fill="none" opacity="0.45"/></svg><div style="position:absolute;left:0;top:0;width:800px;height:20px;background:#2c2d2f"></div>
<div style="position:absolute;left:2.5px;top:3px;width:1px;height:14px;background:#414141"></div><div style="position:absolute;left:4.5px;top:3px;width:1px;height:14px;background:#414141"></div>
<div style="position:absolute;left:78.5px;top:3px;width:1px;height:14px;background:#414141"></div><div style="position:absolute;left:80.5px;top:3px;width:1px;height:14px;background:#414141"></div>
<div style="position:absolute;left:553.0px;top:3px;width:1px;height:14px;background:#414141"></div><div style="position:absolute;left:555.0px;top:3px;width:1px;height:14px;background:#414141"></div>
<div style="position:absolute;left:10.0px;top:2.5px;width:29.0px;height:15.0px;background:#4a4a4a;border-radius:2px;"><svg width="14" height="14" viewBox="0 0 14 14" style="position:absolute;left:1.8px;top:1px"><rect x="1.5" y="1.5" width="10" height="10" fill="none" stroke="#bdbdbd" stroke-width="1"/><path d="M2,11 L11,2" stroke="#bdbdbd" stroke-width="1"/><circle cx="3.5" cy="10.5" r="2" fill="none" stroke="#c8553a" stroke-width="1"/></svg><svg width="8" height="5" viewBox="0 0 8 5" style="position:absolute;left:18.5px;top:6.0px"><path d="M0.8,0.8 L7.2,0.8 L4,4.3 Z" fill="#b8b8b8"/></svg></div>
<div style="position:absolute;left:42.0px;top:2.5px;width:29.0px;height:15.0px;background:#4a4a4a;border-radius:2px;"><svg width="14" height="14" viewBox="0 0 14 14" style="position:absolute;left:2.5px;top:0.5px"><path d="M6.5,1.5 L11.5,4 L11.5,9.5 L6.5,12.5 L1.5,9.5 L1.5,4 Z M1.5,4 L6.5,6.5 L11.5,4 M6.5,6.5 L6.5,12.5" fill="none" stroke="#bdbdbd" stroke-width="1"/><circle cx="10.5" cy="10.5" r="2" fill="none" stroke="#c8553a" stroke-width="1"/></svg><svg width="8" height="5" viewBox="0 0 8 5" style="position:absolute;left:18.5px;top:6.0px"><path d="M0.8,0.8 L7.2,0.8 L4,4.3 Z" fill="#b8b8b8"/></svg></div>
<div style="position:absolute;left:87.0px;top:2.5px;width:17.5px;height:15.0px;background:#4a4a4a;border-radius:2px;border-radius:2px 0 0 2px;"><svg width="14" height="14" viewBox="0 0 14 14" style="position:absolute;left:2px;top:0.5px"><path d="M3,1 V10 M6,1 V10 M9,1 V7 M1,3 H11 M1,6 H11 M1,9 H7" stroke="#c0c0c0" stroke-width="1.2" fill="none"/><path d="M8,8 L10,11 L12,8 M10,11 V13.5" stroke="#e0e0e0" stroke-width="1.3" fill="none"/></svg></div>
<div style="position:absolute;left:105.0px;top:2.5px;width:10.5px;height:15.0px;background:#4a4a4a;border-radius:2px;border-radius:0 2px 2px 0;"><svg width="8" height="5" viewBox="0 0 8 5" style="position:absolute;left:1.5px;top:6.0px"><path d="M0.8,0.8 L7.2,0.8 L4,4.3 Z" fill="#b8b8b8"/></svg></div>
<div style="position:absolute;left:118.8px;top:2.5px;width:16.5px;height:15.0px;background:#2f3d55;border-radius:2px;border-radius:2px 0 0 2px;"><svg width="14" height="14" viewBox="0 0 14 14" style="position:absolute;left:2px;top:0.5px"><path d="M2,2.5 H11 M2,6.5 H7 M2,10.5 H7 M3.5,1 V12 M7.5,1 V4" stroke="#5f8ac4" stroke-width="1" fill="none"/><path d="M8,5 H10 A3,3 0 0 1 10,11 H8" stroke="#b8629a" stroke-width="1.3" fill="none"/></svg></div>
<div style="position:absolute;left:136.0px;top:2.5px;width:10.0px;height:15.0px;background:#2f3d55;border-radius:2px;border-radius:0 2px 2px 0;"><svg width="8" height="5" viewBox="0 0 8 5" style="position:absolute;left:1.2px;top:6.0px"><path d="M0.8,0.8 L7.2,0.8 L4,4.3 Z" fill="#5d8fd0"/></svg></div>
<div style="position:absolute;left:149.5px;top:2.5px;width:29.3px;height:15.0px;background:#4a4a4a;border-radius:2px;"><svg width="16" height="14" viewBox="0 0 16 14" style="position:absolute;left:2.5px;top:0.5px"><g transform="translate(0,1) scale(0.86)"><path d="M1.5,1 V13 M12.5,1 V13 M1.5,4 H12.5 M1.5,9.5 H12.5" stroke="#c0c0c0" stroke-width="1.6" fill="none"/><path d="M4.5,4 V6.5 M7,4 V6.5 M9.5,4 V6.5 M4.5,9.5 V12 M7,9.5 V12 M9.5,9.5 V12" stroke="#bdbdbd" stroke-width="1" fill="none"/></g></svg><svg width="8" height="5" viewBox="0 0 8 5" style="position:absolute;left:19.0px;top:6.0px"><path d="M0.8,0.8 L7.2,0.8 L4,4.3 Z" fill="#b8b8b8"/></svg></div>
<div style="position:absolute;left:561.0px;top:2.5px;width:29.0px;height:15.0px;background:#4a4a4a;border-radius:2px;"><svg width="14" height="14" viewBox="0 0 14 14" style="position:absolute;left:3px;top:0.5px"><circle cx="6.5" cy="7" r="5" fill="none" stroke="#c0c0c0" stroke-width="1.4"/><path d="M3,9 A4.2,4.2 0 0 0 10.5,9.5 A5,4 0 0 1 3,9Z" fill="#c0c0c0"/></svg><svg width="8" height="5" viewBox="0 0 8 5" style="position:absolute;left:18.5px;top:6.0px"><path d="M0.8,0.8 L7.2,0.8 L4,4.3 Z" fill="#b8b8b8"/></svg></div>
<div style="position:absolute;left:593.0px;top:2.5px;width:24.0px;height:15.0px;background:#4a4a4a;border-radius:2px;"><span style="position:absolute;left:0;width:24px;text-align:center;top:2.5px;font-size:8.6px;font-weight:bold;line-height:10px;color:#cfcfcf;">2D</span></div>
<div style="position:absolute;left:620.0px;top:2.5px;width:24.3px;height:15.0px;background:#3b5474;border-radius:2px;"><svg width="12" height="14" viewBox="0 0 12 14" style="position:absolute;left:6px;top:0.5px"><circle cx="6" cy="5.4" r="3.1" fill="#cfe0f2"/><rect x="4.7" y="8" width="2.6" height="3" fill="#bcd0e4"/><rect x="5.2" y="11" width="1.6" height="1" fill="#9fb6cf"/></svg></div>
<div style="position:absolute;left:647.5px;top:2.5px;width:24.5px;height:15.0px;background:#333333;border-radius:2px;"><svg width="14" height="14" viewBox="0 0 14 14" style="position:absolute;left:5px;top:0.5px"><path d="M2,5.5 H4 L6.5,3.5 V10.5 L4,8.5 H2 Z" fill="#8a8a8a"/><path d="M8,8 L11,11 M11,8 L8,11" stroke="#8a8a8a" stroke-width="1"/></svg></div>
<div style="position:absolute;left:675.2px;top:2.5px;width:16.8px;height:15.0px;background:#3b5474;border-radius:2px;border-radius:2px 0 0 2px;"><svg width="14" height="14" viewBox="0 0 14 14" style="position:absolute;left:2.5px;top:0.5px"><path d="M1.5,9 L6,7 L10.5,9 L6,11 Z" fill="#d6e2f0"/><path d="M1.5,6.5 L6,4.5 L10.5,6.5 L6,8.5 Z" fill="#d6e2f0"/><path d="M9.5,1 L10.2,3 L12.2,3.6 L10.2,4.2 L9.5,6.2 L8.8,4.2 L6.8,3.6 L8.8,3 Z" fill="#eef4fb"/></svg></div>
<div style="position:absolute;left:692.8px;top:2.5px;width:11.0px;height:15.0px;background:#3b5474;border-radius:2px;border-radius:0 2px 2px 0;"><svg width="8" height="5" viewBox="0 0 8 5" style="position:absolute;left:1.7px;top:6.0px"><path d="M0.8,0.8 L7.2,0.8 L4,4.3 Z" fill="#b9c9dd"/></svg></div>
<div style="position:absolute;left:706.6px;top:2.5px;width:24.4px;height:15.0px;background:#3b5474;border-radius:2px;"><svg width="16" height="14" viewBox="0 0 16 14" style="position:absolute;left:4.2px;top:0.5px"><path d="M1.5,7 Q8,1.5 14.5,7 Q8,12.5 1.5,7 Z" fill="none" stroke="#d6e2f0" stroke-width="1.2"/><circle cx="8" cy="7" r="2" fill="none" stroke="#d6e2f0" stroke-width="1.1"/><path d="M3.5,12 L12.5,2" stroke="#d6e2f0" stroke-width="1.3"/></svg></div>
<div style="position:absolute;left:734.2px;top:2.5px;width:28.8px;height:15.0px;background:#4a4a4a;border-radius:2px;"><svg width="14" height="14" viewBox="0 0 14 14" style="position:absolute;left:2.5px;top:0.5px"><rect x="1.5" y="3.5" width="7.5" height="7" fill="#b8b8b8"/><path d="M9.5,6 L12.5,4 V10 L9.5,8 Z" fill="#b8b8b8"/><path d="M4,3.5 V10.5 M6.5,3.5 V10.5" stroke="#6a6a6a" stroke-width="0.8"/></svg><svg width="8" height="5" viewBox="0 0 8 5" style="position:absolute;left:18.5px;top:6.0px"><path d="M0.8,0.8 L7.2,0.8 L4,4.3 Z" fill="#b8b8b8"/></svg></div>
<div style="position:absolute;left:766.3px;top:2.5px;width:16.2px;height:15.0px;background:#4a4a4a;border-radius:2px;border-radius:2px 0 0 2px;"><svg width="14" height="14" viewBox="0 0 14 14" style="position:absolute;left:1.3px;top:0.5px"><circle cx="7" cy="7" r="5" fill="none" stroke="#c0c0c0" stroke-width="1.2"/><ellipse cx="7" cy="7" rx="2.2" ry="5" fill="none" stroke="#c0c0c0" stroke-width="0.9"/><path d="M2,7 H12 M7,0.5 V2.5 M7,11.5 V13.5 M0.5,7 H2 M12,7 H13.5" stroke="#c0c0c0" stroke-width="0.9"/></svg></div>
<div style="position:absolute;left:783.8px;top:2.5px;width:10.6px;height:15.0px;background:#4a4a4a;border-radius:2px;border-radius:0 2px 2px 0;"><svg width="8" height="5" viewBox="0 0 8 5" style="position:absolute;left:1.4px;top:6.0px"><path d="M0.8,0.8 L7.2,0.8 L4,4.3 Z" fill="#b8b8b8"/></svg></div>
<div style="position:absolute;left:-2px;top:21.7px;width:32.8px;height:109.6px;background:#0b0b0b;border-radius:3px;"></div>
<div style="position:absolute;left:9.5px;top:26px;width:12.5px;height:1px;background:#7c7c7c"></div><div style="position:absolute;left:9.5px;top:28px;width:12.5px;height:1px;background:#7c7c7c"></div>
<div style="position:absolute;left:1.3px;top:34.8px;width:28.2px;height:14.0px;background:#4a4a4a;border-radius:2px;"><svg width="22" height="14" viewBox="0 0 22 14" style="position:absolute;left:3.4px;top:0px"><path d="M9.5,12.5 C8,11 7,9 6.3,7.8 C6,7 7,6.6 7.6,7.4 L8.6,8.8 L8.3,3.5 C8.3,2.6 9.5,2.6 9.6,3.5 L10,7 L10.3,2.3 C10.4,1.4 11.6,1.4 11.6,2.3 L11.6,7 L12.4,2.8 C12.6,2 13.7,2.2 13.6,3.1 L13.1,7.4 L14.3,4.6 C14.7,3.8 15.7,4.3 15.4,5.1 L14.2,9.5 C13.9,11 13.3,12 12.8,12.5 Z" fill="#d8d8d8"/></svg></div>
<div style="position:absolute;left:1.3px;top:50.8px;width:28.2px;height:14.0px;background:#3b5474;border-radius:2px;"><svg width="22" height="14" viewBox="0 0 22 14" style="position:absolute;left:3.4px;top:0px"><path d="M11,2 V12 M6,7 H16" stroke="#9cc4f0" stroke-width="1"/><path d="M11,0.8 L13,3.3 H9 Z M11,13.2 L13,10.7 H9 Z M4.8,7 L7.3,5 V9 Z M17.2,7 L14.7,5 V9 Z" fill="#b9d6f5"/></svg></div>
<div style="position:absolute;left:1.3px;top:66.8px;width:28.2px;height:14.0px;background:#4a4a4a;border-radius:2px;"><svg width="22" height="14" viewBox="0 0 22 14" style="position:absolute;left:3.4px;top:0px"><path d="M7,8.5 A4.3,4.3 0 0 1 14,4" fill="none" stroke="#c0c0c0" stroke-width="1.2"/><path d="M15,5.5 A4.3,4.3 0 0 1 8,10" fill="none" stroke="#c0c0c0" stroke-width="1.2"/><path d="M13,2 L15.5,4 L12.8,5.5 Z M9,12 L6.5,10 L9.2,8.5 Z" fill="#c0c0c0"/></svg></div>
<div style="position:absolute;left:1.3px;top:82.8px;width:28.2px;height:14.0px;background:#4a4a4a;border-radius:2px;"><svg width="22" height="14" viewBox="0 0 22 14" style="position:absolute;left:3.4px;top:0px"><rect x="6" y="2" width="10" height="10" fill="none" stroke="#c0c0c0" stroke-width="1"/><rect x="6" y="8" width="4" height="4" fill="none" stroke="#c0c0c0" stroke-width="1"/><path d="M10.5,7.5 L14,4 M11.5,4 H14 V6.5" fill="none" stroke="#c0c0c0" stroke-width="1"/></svg></div>
<div style="position:absolute;left:1.3px;top:98.8px;width:28.2px;height:14.0px;background:#4a4a4a;border-radius:2px;"><svg width="22" height="14" viewBox="0 0 22 14" style="position:absolute;left:3.4px;top:0px"><rect x="6.5" y="2.5" width="9" height="9" fill="none" stroke="#c0c0c0" stroke-width="1"/><path d="M5.5,1.5 h2 v2 h-2 Z M14.5,1.5 h2 v2 h-2 Z M5.5,10.5 h2 v2 h-2 Z M14.5,10.5 h2 v2 h-2 Z" fill="#e6e6e6"/></svg></div>
<div style="position:absolute;left:1.3px;top:114.8px;width:28.2px;height:14.0px;background:#4a4a4a;border-radius:2px;"><svg width="22" height="14" viewBox="0 0 22 14" style="position:absolute;left:3.4px;top:0px"><circle cx="10.5" cy="7.5" r="3.6" fill="none" stroke="#c0c0c0" stroke-width="1"/><path d="M10.5,2 V13 M5,7.5 H16" stroke="#c0c0c0" stroke-width="0.9"/><path d="M6,11 L4.5,12.8 M15.5,3.2 L17,1.5 M17,1.5 h-1.5 M17,1.5 v1.5" stroke="#c0c0c0" stroke-width="0.9" fill="none"/></svg></div>
<div style="position:absolute;left:348px;top:27px;width:96.5px;height:17.7px;background:#141414;border-radius:2px"></div>
<div style="position:absolute;left:349.0px;top:28.0px;width:23.3px;height:15.7px;background:#3d5a84;border-radius:1px;"><svg width="16" height="15" viewBox="0 0 16 15" style="position:absolute;left:3.7px;top:0.3px"><g transform="translate(8,7.5) scale(0.88) translate(-8,-7.5)"><path d="M8,1.5 L13.5,4.3 V10 L8,13 L2.5,10 V4.3 Z M2.5,4.3 L8,7.2 L13.5,4.3 M8,7.2 V13" fill="none" stroke="#e6dcc8" stroke-width="1.1"/></g></svg></div>
<div style="position:absolute;left:373.0px;top:28.0px;width:22.3px;height:15.7px;background:#4a4a4a;border-radius:1px;"><svg width="16" height="15" viewBox="0 0 16 15" style="position:absolute;left:3.2px;top:0.3px"><g transform="translate(8,7.5) scale(0.88) translate(-8,-7.5)"><rect x="3.5" y="3" width="9" height="9" fill="none" stroke="#d8d0c0" stroke-width="1"/><path d="M2.3,1.8 h2.4 v2.4 h-2.4 Z M11.3,1.8 h2.4 v2.4 h-2.4 Z M2.3,10.8 h2.4 v2.4 h-2.4 Z M11.3,10.8 h2.4 v2.4 h-2.4 Z" fill="#f0d8a8"/></g></svg></div>
<div style="position:absolute;left:396.7px;top:28.0px;width:22.8px;height:15.7px;background:#4a4a4a;border-radius:1px;"><svg width="16" height="15" viewBox="0 0 16 15" style="position:absolute;left:3.4px;top:0.3px"><g transform="translate(8,7.5) scale(0.88) translate(-8,-7.5)"><path d="M8,1.5 L13.5,4.3 V10 L8,13 L2.5,10 V4.3 Z M2.5,4.3 L8,7.2 L13.5,4.3 M8,7.2 V13" fill="none" stroke="#e6dcc8" stroke-width="1.1"/><path d="M7.2,7.5 V12 " stroke="#e8a838" stroke-width="1.2"/></g></svg></div>
<div style="position:absolute;left:420.9px;top:28.0px;width:22.5px;height:15.7px;background:#4a4a4a;border-radius:1px;"><svg width="16" height="15" viewBox="0 0 16 15" style="position:absolute;left:3.2px;top:0.3px"><g transform="translate(8,7.5) scale(0.88) translate(-8,-7.5)"><path d="M8,1.5 L13.5,4.3 V10 L8,13 L2.5,10 V4.3 Z" fill="none" stroke="#e6dcc8" stroke-width="1.1"/><path d="M3,4.8 L7.6,7.3 V12.4 L3,9.8 Z" fill="#e8a838"/><path d="M4.5,7 L6,10" stroke="#fff2c8" stroke-width="0.8"/></g></svg></div>
<svg width="70" height="90" viewBox="0 0 70 90" style="position:absolute;left:720px;top:20px">
<path d="M30.5,17.3 L39.6,17.3 L35,32.7 Z" fill="#8ed23c"/><path d="M30.5,17.3 L33.5,17.3 L35,32.7 Z" fill="#6fae2c"/>
<path d="M13,37 L17,48 L24.5,39.5 L24.5,38 Z" fill="#c9c9c9"/><path d="M13,37 L24.5,38 L24.5,39.5 L15,42.5Z" fill="#e2e2e2"/>
<path d="M35,45.5 L31,58 Q35,60 39,58 Z" fill="#c6c6c6"/><path d="M35,45.5 L31,58 Q32.5,59 34,59.2 Z" fill="#ececec"/>
<path d="M42,37 L52,34.5 L50,39.5 Z" fill="#3c7ed0"/>
<path d="M42.7,41 L53,39 L56,45 L50,52 L45,49 Z" fill="#c4541e"/><path d="M51,41 Q54,45 50.5,50" stroke="#f0903c" stroke-width="1.6" fill="none"/>
<rect x="23.6" y="33.6" width="17.4" height="11" fill="#d6d6d6"/><path d="M23.6,33.6 H41 V36 H23.6Z" fill="#e6e6e6"/><path d="M36,36 H41 V44.6 H36Z" fill="#f2f2f2"/>
<path d="M57.2,15.6 h4.4 v3.4 h-4.4 Z" fill="#dcdcdc"/><path d="M58.2,15.6 v-1.1 a1.2,1.2 0 0 1 2.4,0 V15.6" stroke="#dcdcdc" stroke-width="0.8" fill="none"/>
<path d="M23.5,75.5 L16.5,78.5 L23.5,81.5 M16.5,78.5 H23.5" stroke="#c8c8c8" stroke-width="1" fill="none"/>
<text x="33.5" y="16" font-family="Liberation Sans, sans-serif" font-weight="bold" font-size="10" fill="#ffffff" text-anchor="middle">y</text>
<text x="53.8" y="39" font-family="Liberation Sans, sans-serif" font-weight="bold" font-size="9" fill="#ffffff" text-anchor="middle">z</text>
<text x="60" y="50" font-family="Liberation Sans, sans-serif" font-weight="bold" font-size="9" fill="#ffffff" text-anchor="middle">x</text>
<text x="27" y="82" font-family="Liberation Sans, sans-serif" font-size="9.4" fill="#c8c8c8">Persp</text>
</svg>
<div style="position:absolute;left:798.6px;top:0;width:1.4px;height:480px;background:#353535"></div>
<div style="position:absolute;left:798.6px;top:284px;width:1.4px;height:33px;background:#c6c4b8"></div>
<div style="position:absolute;left:797.2px;top:0;width:1.4px;height:481px;background:#060606"></div>
<div style="position:absolute;left:0;top:478.5px;width:800px;height:17px;background:#282828"></div>
<div style="position:absolute;left:0;top:478.5px;width:800px;height:2.5px;background:#0d0d0d"></div>
<div style="position:absolute;left:-0.5px;top:483.5px;font-size:9px;line-height:11px;color:#bcbcbc;letter-spacing:-0.1px;">Console</div></body></html>
